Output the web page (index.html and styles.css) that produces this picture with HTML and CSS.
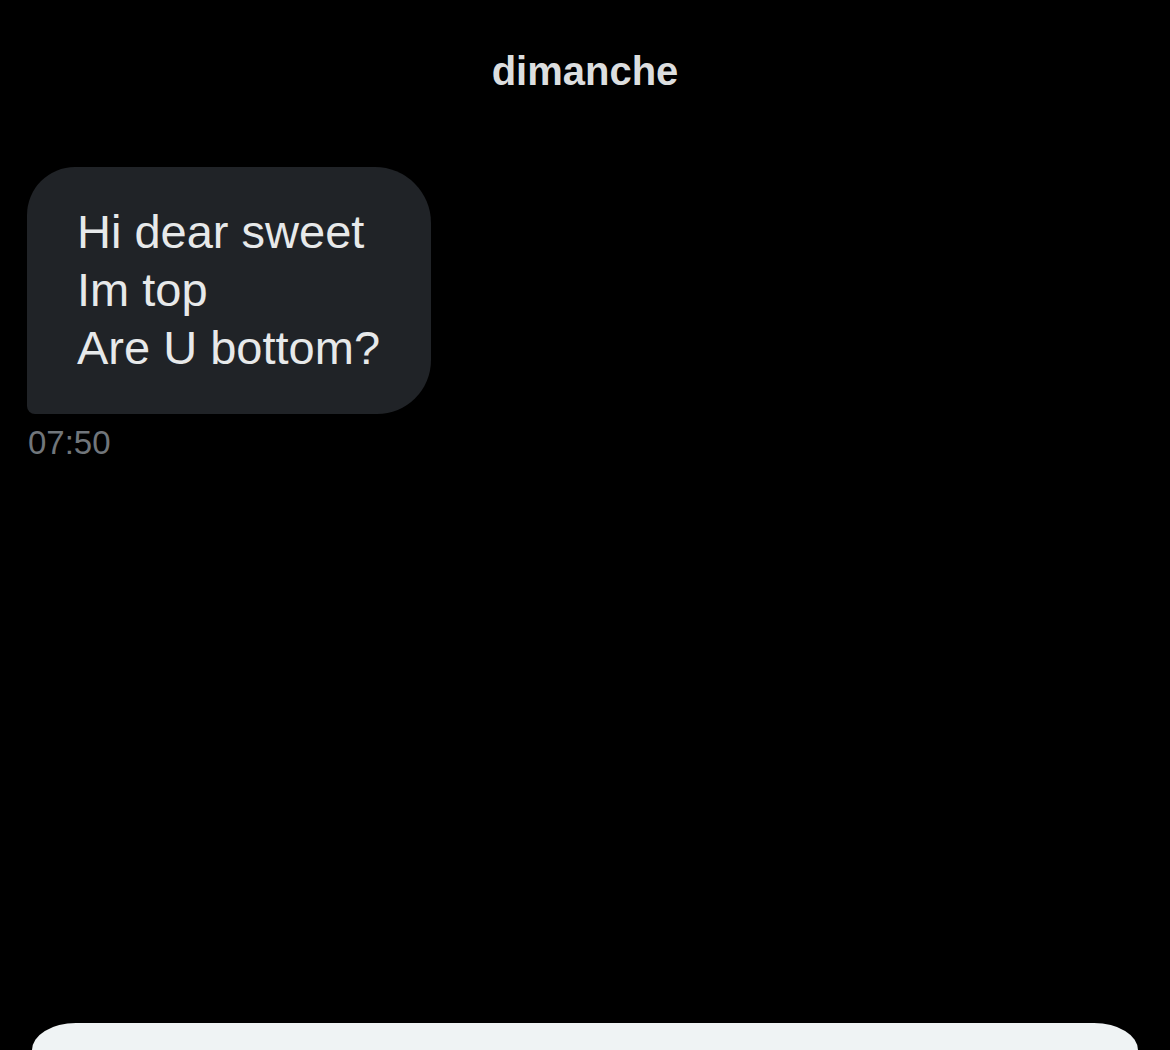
FILE: index.html
```html
<!DOCTYPE html>
<html lang="fr">
<head>
  <meta charset="UTF-8">
  <title>Messages</title>
  <link rel="stylesheet" href="styles.css">
</head>
<body>

  <div class="thread">
    <h2 class="day">dimanche</h2>

    <div class="message">
      <div class="bubble">Hi dear sweet<br>Im top<br>Are U bottom?</div>
      <div class="time">07:50</div>
    </div>
  </div>

  <div class="composer"></div>

</body>
</html>
```

FILE: styles.css
```css
html, body {
  margin: 0;
  background: #000;
}
body {
  height: 1050px;
  overflow: hidden;
  font-family: "Liberation Sans", Arial, sans-serif;
  color: #e7e9ea;
}
.thread {
  height: 1023px;
  padding: 0 27px;
  box-sizing: border-box;
}
.day {
  margin: 0;
  padding-top: 47px;
  font-size: 40px;
  line-height: 48px;
  font-weight: bold;
  text-align: center;
  color: #dcdedf;
}
.message {
  margin-top: 72px;
  display: flex;
  flex-direction: column;
  align-items: flex-start;
}
.bubble {
  background: #202327;
  padding: 36px 51px 37px 50px;
  font-size: 47px;
  line-height: 58px;
  border-radius: 48px 56px 54px 8px;
}
.time {
  margin-top: 11px;
  font-size: 33px;
  line-height: 36px;
  color: #71767b;
  padding-left: 1px;
}
.composer {
  margin: 0 32px;
  height: 27px;
  background: #eff3f4;
  border-radius: 44px 44px 0 0 / 27px 27px 0 0;
}
```
